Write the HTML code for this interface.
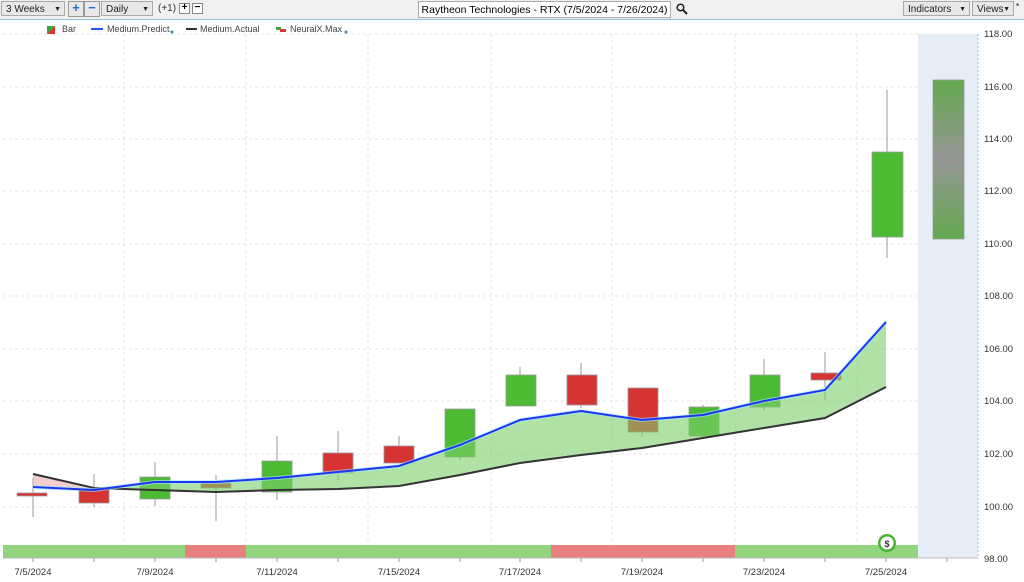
<!DOCTYPE html>
<html><head><meta charset="utf-8"><style>
body{margin:0;width:1024px;height:582px;overflow:hidden;background:#fff;font-family:"Liberation Sans",sans-serif;}
.top{position:absolute;left:0;top:0;width:1024px;height:19px;background:#f0f0f0;border-bottom:1px solid #8fc0e6;}
.dd{position:absolute;top:1px;height:15px;border:1px solid #aaa;background:#e8e8e8;font-size:10px;line-height:15px;padding-left:4px;box-sizing:border-box;color:#222}
.dd:after{content:"▼";position:absolute;right:3px;font-size:7px}
.btn{position:absolute;top:1px;width:14px;height:14px;border:1px solid #999;background:#e8e8e8;color:#1e6fc7;font-weight:bold;font-size:13px;line-height:12px;text-align:center}
.sb{position:absolute;top:3px;width:9px;height:9px;border:1px solid #888;background:#fff;font-size:10px;line-height:8px;text-align:center;font-weight:bold}
</style></head><body>
<div class="top">
<div class="dd" style="left:1px;width:64px">3 Weeks</div>
<div class="btn" style="left:68px">+</div><div class="btn" style="left:84px">−</div>
<div class="dd" style="left:101px;width:52px">Daily</div>
<div style="position:absolute;left:158px;top:3px;font-size:10px;color:#333">(+1)</div>
<div class="sb" style="left:179px">+</div><div class="sb" style="left:192px">−</div>
<div style="position:absolute;left:418px;top:1px;width:253px;height:17px;border:1px solid #aaa;background:#fff;font-size:10.5px;line-height:16px;text-align:center;box-sizing:border-box;white-space:nowrap;overflow:hidden">Raytheon Technologies - RTX (7/5/2024 - 7/26/2024)</div>
<svg style="position:absolute;left:676px;top:3px" width="12" height="12"><circle cx="4.5" cy="4.5" r="3.3" fill="none" stroke="#222" stroke-width="1.5"/><line x1="7" y1="7" x2="11" y2="11" stroke="#222" stroke-width="2"/></svg>
<div class="dd" style="left:903px;width:67px">Indicators</div>
<div class="dd" style="left:972px;width:42px">Views</div>
<div style="position:absolute;left:1016px;top:2px;font-size:8px">*</div>
</div>
<svg width="1024" height="582" style="position:absolute;left:0;top:0" font-family="Liberation Sans, sans-serif">
<defs>
<linearGradient id="pg" x1="0" y1="0" x2="0" y2="1"><stop offset="0" stop-color="#63a84f"/><stop offset="0.5" stop-color="#969696"/><stop offset="1" stop-color="#63a84f"/></linearGradient>
</defs>
<rect x="918" y="34" width="60" height="524" fill="#e6edf6"/>
<line x1="978" y1="34" x2="978" y2="558" stroke="#9cc7e8" stroke-dasharray="2,2"/>
<g stroke="#e6e6e6" stroke-dasharray="3,3">
<line x1="3" y1="34" x2="918" y2="34"/><line x1="3" y1="87" x2="918" y2="87"/><line x1="3" y1="139" x2="918" y2="139"/><line x1="3" y1="191" x2="918" y2="191"/><line x1="3" y1="244" x2="918" y2="244"/><line x1="3" y1="296" x2="918" y2="296"/><line x1="3" y1="349" x2="918" y2="349"/><line x1="3" y1="401" x2="918" y2="401"/><line x1="3" y1="454" x2="918" y2="454"/><line x1="3" y1="507" x2="918" y2="507"/>
<line x1="124" y1="34" x2="124" y2="558"/><line x1="246" y1="34" x2="246" y2="558"/><line x1="368" y1="34" x2="368" y2="558"/><line x1="491" y1="34" x2="491" y2="558"/><line x1="612" y1="34" x2="612" y2="558"/><line x1="735" y1="34" x2="735" y2="558"/><line x1="857" y1="34" x2="857" y2="558"/>
</g>
<g font-size="9" fill="#444">
<text x="62" y="32">Bar</text><text x="107" y="32">Medium.Predict</text><text x="200" y="32">Medium.Actual</text><text x="290" y="32">NeuralX.Max</text>
</g>
<polygon points="47,26 55,26 47,34" fill="#3a3"/><polygon points="55,26 55,34 47,34" fill="#d33"/>
<line x1="91" y1="29" x2="103" y2="29" stroke="#2255ff" stroke-width="2"/>
<line x1="186" y1="29" x2="197" y2="29" stroke="#333" stroke-width="2"/>
<rect x="276" y="27" width="5" height="3" fill="#3a3"/><rect x="280" y="29" width="6" height="3" fill="#d33"/>
<circle cx="172" cy="32" r="1.5" fill="#48a"/><circle cx="346" cy="32" r="1.5" fill="#48a"/>
<g stroke="#999" stroke-width="1">
<line x1="33" y1="478" x2="33" y2="517"/><line x1="94" y1="474" x2="94" y2="507"/><line x1="155" y1="462" x2="155" y2="506"/><line x1="216" y1="475" x2="216" y2="521"/><line x1="277" y1="436" x2="277" y2="500"/><line x1="338" y1="431" x2="338" y2="480"/><line x1="399" y1="436" x2="399" y2="463"/><line x1="460" y1="409" x2="460" y2="460"/><line x1="520" y1="367" x2="520" y2="406"/><line x1="581" y1="363" x2="581" y2="408"/><line x1="642" y1="388" x2="642" y2="437"/><line x1="703" y1="405" x2="703" y2="439"/><line x1="764" y1="359" x2="764" y2="411"/><line x1="825" y1="352" x2="825" y2="400"/><line x1="887" y1="90" x2="887" y2="258"/>
</g>
<g stroke="#999" stroke-width="0.8">
<rect x="17" y="493" width="30" height="3" fill="#d63333"/><rect x="79" y="489" width="30" height="14" fill="#d63333"/><rect x="140" y="477" width="30" height="22" fill="#4cbb33"/><rect x="201" y="483" width="30" height="5" fill="#d63333"/><rect x="262" y="461" width="30" height="31" fill="#4cbb33"/><rect x="323" y="453" width="30" height="20" fill="#d63333"/><rect x="384" y="446" width="30" height="17" fill="#d63333"/><rect x="445" y="409" width="30" height="48" fill="#4cbb33"/><rect x="506" y="375" width="30" height="31" fill="#4cbb33"/><rect x="567" y="375" width="30" height="30" fill="#d63333"/><rect x="628" y="388" width="30" height="44" fill="#d63333"/><rect x="689" y="407" width="30" height="29" fill="#4cbb33"/><rect x="750" y="375" width="30" height="32" fill="#4cbb33"/><rect x="811" y="373" width="30" height="7" fill="#d63333"/><rect x="872" y="152" width="31" height="85" fill="#4cbb33"/>
<rect x="933" y="80" width="31" height="159" fill="url(#pg)"/>
</g>
<polygon points="33,474 91,489 33,487" fill="#f0b8b8" fill-opacity="0.7"/>
<polygon points="91,489 155,482 216,482 277,478 338,472 399,466 460,445 520,420 581,411 642,420 703,415 764,401 825,390 886,322 886,387 825,418 764,428 703,438 642,448 581,455 520,463 460,475 399,486 338,489 277,490 216,492 155,490" fill="#7ccf6a" fill-opacity="0.6"/>
<polyline points="33,474 94,488 155,490 216,492 277,490 338,489 399,486 460,475 520,463 581,455 642,448 703,438 764,428 825,418 886,387" fill="none" stroke="#333" stroke-width="2"/>
<polyline points="33,487 94,490 155,482 216,482 277,478 338,472 399,466 460,445 520,420 581,411 642,420 703,415 764,401 825,390 886,322" fill="none" stroke="#9ef" stroke-width="4" stroke-opacity="0.6"/>
<polyline points="33,487 94,490 155,482 216,482 277,478 338,472 399,466 460,445 520,420 581,411 642,420 703,415 764,401 825,390 886,322" fill="none" stroke="#2233ee" stroke-width="2"/>
<rect x="3" y="545" width="182" height="13" fill="#93d47e"/><rect x="185" y="545" width="61" height="13" fill="#e88080"/><rect x="246" y="545" width="305" height="13" fill="#93d47e"/><rect x="551" y="545" width="184" height="13" fill="#e88080"/><rect x="735" y="545" width="183" height="13" fill="#93d47e"/>
<circle cx="887" cy="543" r="9" fill="#4cb233"/><circle cx="887" cy="543" r="6.5" fill="#fff"/>
<text x="887" y="547" font-size="9" font-weight="bold" text-anchor="middle" fill="#333">$</text>
<line x1="3" y1="558" x2="978" y2="558" stroke="#bbb"/>
<g stroke="#999"><line x1="33" y1="558" x2="33" y2="562"/><line x1="94" y1="558" x2="94" y2="562"/><line x1="155" y1="558" x2="155" y2="562"/><line x1="216" y1="558" x2="216" y2="562"/><line x1="277" y1="558" x2="277" y2="562"/><line x1="338" y1="558" x2="338" y2="562"/><line x1="399" y1="558" x2="399" y2="562"/><line x1="460" y1="558" x2="460" y2="562"/><line x1="520" y1="558" x2="520" y2="562"/><line x1="581" y1="558" x2="581" y2="562"/><line x1="642" y1="558" x2="642" y2="562"/><line x1="703" y1="558" x2="703" y2="562"/><line x1="764" y1="558" x2="764" y2="562"/><line x1="825" y1="558" x2="825" y2="562"/><line x1="886" y1="558" x2="886" y2="562"/><line x1="947" y1="558" x2="947" y2="562"/></g>
<g font-size="9.5" fill="#333" text-anchor="middle">
<text x="33" y="575">7/5/2024</text><text x="155" y="575">7/9/2024</text><text x="277" y="575">7/11/2024</text><text x="399" y="575">7/15/2024</text><text x="520" y="575">7/17/2024</text><text x="642" y="575">7/19/2024</text><text x="764" y="575">7/23/2024</text><text x="886" y="575">7/25/2024</text>
</g>
<g font-size="9.5" fill="#333">
<text x="984" y="37">118.00</text><text x="984" y="90">116.00</text><text x="984" y="142">114.00</text><text x="984" y="194">112.00</text><text x="984" y="247">110.00</text><text x="984" y="299">108.00</text><text x="984" y="352">106.00</text><text x="984" y="404">104.00</text><text x="984" y="457">102.00</text><text x="984" y="510">100.00</text><text x="984" y="562">98.00</text>
</g>
</svg>
</body></html>
